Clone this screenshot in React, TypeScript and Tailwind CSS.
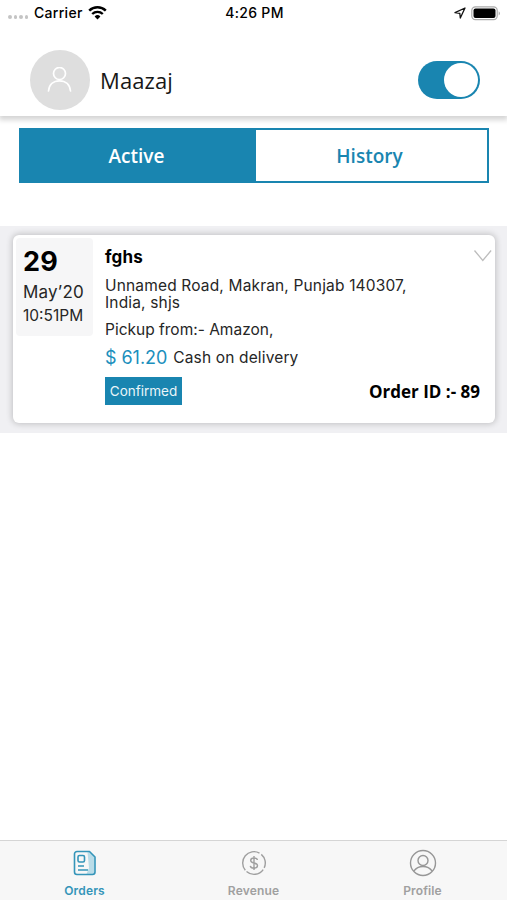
import React, { useState } from 'react';

interface Order {
  id: number;
  day: string;
  month: string;
  time: string;
  customer: string;
  address: string[];
  pickup: string;
  price: string;
  payment: string;
  status: string;
}

const orders: Order[] = [
  {
    id: 89,
    day: '29',
    month: 'May’20',
    time: '10:51PM',
    customer: 'fghs',
    address: ['Unnamed Road, Makran, Punjab 140307,', 'India, shjs'],
    pickup: 'Amazon,',
    price: '$ 61.20',
    payment: 'Cash on delivery',
    status: 'Confirmed',
  },
];

const StatusBar: React.FC = () => (
  <div className="grid h-[26px] grid-cols-3 items-center pr-[6px] pl-[8px] text-[14px] leading-none font-medium text-black">
    <div className="flex items-center">
      <div className="mt-[8px] flex gap-[2px]">
        {[0, 1, 2, 3].map((n) => (
          <span key={n} className="h-[3.5px] w-[3.5px] rounded-full bg-[#c4c4c4]" />
        ))}
      </div>
      <span className="ml-[6px] tracking-[0.3px]">Carrier</span>
      <svg className="ml-[5px]" width="19" height="14" viewBox="0 0 19 14" fill="none" stroke="#000">
        <path d="M1.2 4.6a12 12 0 0 1 16.6 0" strokeWidth="2.5" />
        <path d="M4.2 8a7.6 7.6 0 0 1 10.6 0" strokeWidth="2.4" />
        <path d="M9.5 13.4 6.6 10.5a4.2 4.2 0 0 1 5.8 0z" fill="#000" stroke="none" />
      </svg>
    </div>
    <span className="text-center tracking-[0.3px]">4:26 PM</span>
    <div className="flex items-center justify-end gap-[5px]">
      <svg width="12" height="12" viewBox="0 0 12 12" fill="none" stroke="#111" strokeWidth="1.3" strokeLinejoin="round">
        <path d="M11 1 1 5.7l4.8.6.5 4.7z" />
      </svg>
      <svg width="30" height="15" viewBox="0 0 30 15">
        <rect x="0.8" y="0.8" width="25.4" height="12.9" rx="3.6" fill="#fff" stroke="#aaa" strokeWidth="1.2" />
        <rect x="2.5" y="2.5" width="22" height="9.5" rx="2" fill="#000" />
        <path d="M27.7 5.2c1.7.8 1.7 3.5 0 4.2z" fill="#aaa" />
      </svg>
    </div>
  </div>
);

const OrderCard: React.FC<{ order: Order }> = ({ order }) => (
  <div className="flex h-[188px] rounded-[6px] bg-white pt-[3px] pl-[3px] text-[#262626] shadow-[0_0_6px_1px_rgba(0,0,0,0.2)]">
    <div className="h-[98px] w-[77px] shrink-0 rounded-[4px] bg-[#f6f6f7] pl-[7px] whitespace-nowrap">
      <div className="pt-[8px] text-[27px] leading-[32px] font-bold tracking-[0.2px] text-black">{order.day}</div>
      <div className="mt-[3px] text-[17px] leading-[22px] tracking-[0.2px]">{order.month}</div>
      <div className="mt-[3px] text-[15.5px] leading-[20px]">{order.time}</div>
    </div>
    <div className="ml-[12px] flex grow flex-col pr-[15px] text-[15.5px] whitespace-nowrap">
      <div className="flex h-[39px] justify-between">
        <span className="pt-[8px] text-[17px] leading-[22px] font-bold tracking-[0.2px] text-black">{order.customer}</span>
        <svg className="mt-[11px] -mr-[13px]" width="20" height="14" viewBox="0 0 20 14" fill="none" stroke="#bdbdbd" strokeWidth="1.3">
          <path d="m1.5 1.5 8.3 10 8.3-10" />
        </svg>
      </div>
      <div className="leading-[17px] tracking-[0.16px]">
        {order.address.map((line) => (
          <div key={line}>{line}</div>
        ))}
      </div>
      <div className="mt-[8px] leading-[22px]">Pickup from:- {order.pickup}</div>
      <div className="mt-[5px] flex h-[24px] items-center">
        <span className="-mt-[2px] text-[18px] tracking-[-0.05px] text-[#1b8fbd]">{order.price}</span>
        <span className="ml-[6px] tracking-[0.15px]">{order.payment}</span>
      </div>
      <div className="mt-[7px] flex items-start justify-between">
        <span className="flex h-[28px] w-[77px] items-center justify-center bg-[#1985b0] text-[13.5px] text-[#eaf5f9]">{order.status}</span>
        <span className="mt-[3px] font-['Open_Sans',sans-serif] text-[17px] leading-[24px] font-bold text-black">Order ID :- {order.id}</span>
      </div>
    </div>
  </div>
);

const OrdersIcon = () => (
  <svg width="24" height="26" viewBox="0 0 24 26" fill="none" stroke="#3495b9" strokeWidth="1.6" strokeLinejoin="round">
    <path d="M14.5 2h3l4 4.500v17.500h-8l2.500-6z" fill="#b9dce8" stroke="none" />
    <path d="M4 1.5h12.500l5.500 5.500V22a2.500 2.500 0 0 1-2.500 2.500H4A2.500 2.500 0 0 1 1.500 22V4A2.500 2.500 0 0 1 4 1.500z" />
    <rect x="5" y="5.500" width="6.500" height="6.500" rx="1.500" />
    <path d="M5 16h6M5 20h10" />
  </svg>
);

const RevenueIcon = () => (
  <svg width="26" height="26" viewBox="0 0 26 26" fill="none" stroke="#9f9f9f" strokeWidth="1.4">
    <path d="M4.300 20.200A11.300 11.300 0 0 1 18.500 3.100M20.300 4.400a11.300 11.300 0 0 1 2.900 13.500M22.200 19.600A11.300 11.300 0 0 1 5.500 21.500" />
    <path d="M16.400 10c-.2-1.300-1.500-2-3.400-2-2 0-3.300 1-3.300 2.500 0 3.600 6.800 1.500 6.800 5.100 0 1.600-1.400 2.600-3.500 2.600s-3.500-.8-3.700-2.400M13 6v14" />
  </svg>
);

const ProfileIcon = () => (
  <svg width="28" height="28" viewBox="0 0 28 28" fill="none" stroke="#979797" strokeWidth="1.4">
    <circle cx="14" cy="14" r="12.500" />
    <circle cx="14" cy="11.500" r="5" />
    <path d="M4.800 22.200c4.400-6.300 14-6.300 18.400 0" />
  </svg>
);

const navItems = [
  { label: 'Orders', icon: <OrdersIcon /> },
  { label: 'Revenue', icon: <RevenueIcon /> },
  { label: 'Profile', icon: <ProfileIcon /> },
];

const App: React.FC = () => {
  const [online, setOnline] = useState(true);
  const [tab, setTab] = useState('Active');
  const [page, setPage] = useState('Orders');

  return (
    <div className="flex h-[900px] w-[507px] flex-col overflow-hidden bg-white font-['Inter',sans-serif]">
      <header className="h-[116px] shrink-0 shadow-[0_3px_5px_1px_rgba(0,0,0,0.17)]">
        <StatusBar />
        <div className="flex items-center pt-[24px] pr-[27px] pl-[30px]">
          <div className="flex h-[60px] w-[60px] items-center justify-center rounded-full bg-[#dedede]">
            <svg width="26" height="26" viewBox="0 0 26 26" fill="none" stroke="#fff" strokeWidth="1.7" strokeLinecap="round">
              <circle cx="12.5" cy="6.500" r="6" />
              <path d="M1.500 24c.6-6.400 5-10.200 11-10.200s10.400 3.800 11 10.200" />
            </svg>
          </div>
          <h1 className="ml-[10px] grow font-['Open_Sans',sans-serif] text-[22px] leading-[30px] tracking-[0.1px] text-[#171717]">Maazaj</h1>
          <button
            type="button"
            aria-label="Online"
            onClick={() => setOnline(!online)}
            className={`flex h-[38px] w-[62px] items-center rounded-full p-[2px] ${online ? 'justify-end bg-[#1985b0]' : 'justify-start bg-gray-300'}`}
          >
            <span className="h-[34px] w-[34px] rounded-full bg-white" />
          </button>
        </div>
      </header>

      <div className="mr-[18px] ml-[19px] mt-[12px] grid h-[55px] shrink-0 grid-cols-[235px_1fr] border-2 border-[#1985b0] font-['Open_Sans',sans-serif] text-[19px] font-semibold">
        {['Active', 'History'].map((name) => (
          <button
            key={name}
            type="button"
            onClick={() => setTab(name)}
            className={`pt-[2px] pr-[4px] ${tab === name ? 'bg-[#1985b0] text-white' : 'bg-white text-[#1985b0]'}`}
          >
            {name}
          </button>
        ))}
      </div>

      <main className="mt-[43px] grow">
        <div className="bg-[#f0f0f3] pt-[9px] pr-[12px] pb-[10px] pl-[13px]">
          {orders.map((order) => (
            <OrderCard key={order.id} order={order} />
          ))}
        </div>
      </main>

      <nav className="flex h-[60px] shrink-0 border-t border-[#d5d5d5] bg-[#f7f7f7]">
        {navItems.map((item) => (
          <button
            key={item.label}
            type="button"
            onClick={() => setPage(item.label)}
            className={`flex flex-1 flex-col items-center pt-[8px] text-[12px] leading-[16px] font-semibold tracking-[0.15px] ${page === item.label ? 'text-[#3495b9]' : 'text-[#a0a0a0]'}`}
          >
            <span className="flex h-[28px] items-center">{item.icon}</span>
            <span className="mt-[6px]">{item.label}</span>
          </button>
        ))}
      </nav>
    </div>
  );
};

export default App;
